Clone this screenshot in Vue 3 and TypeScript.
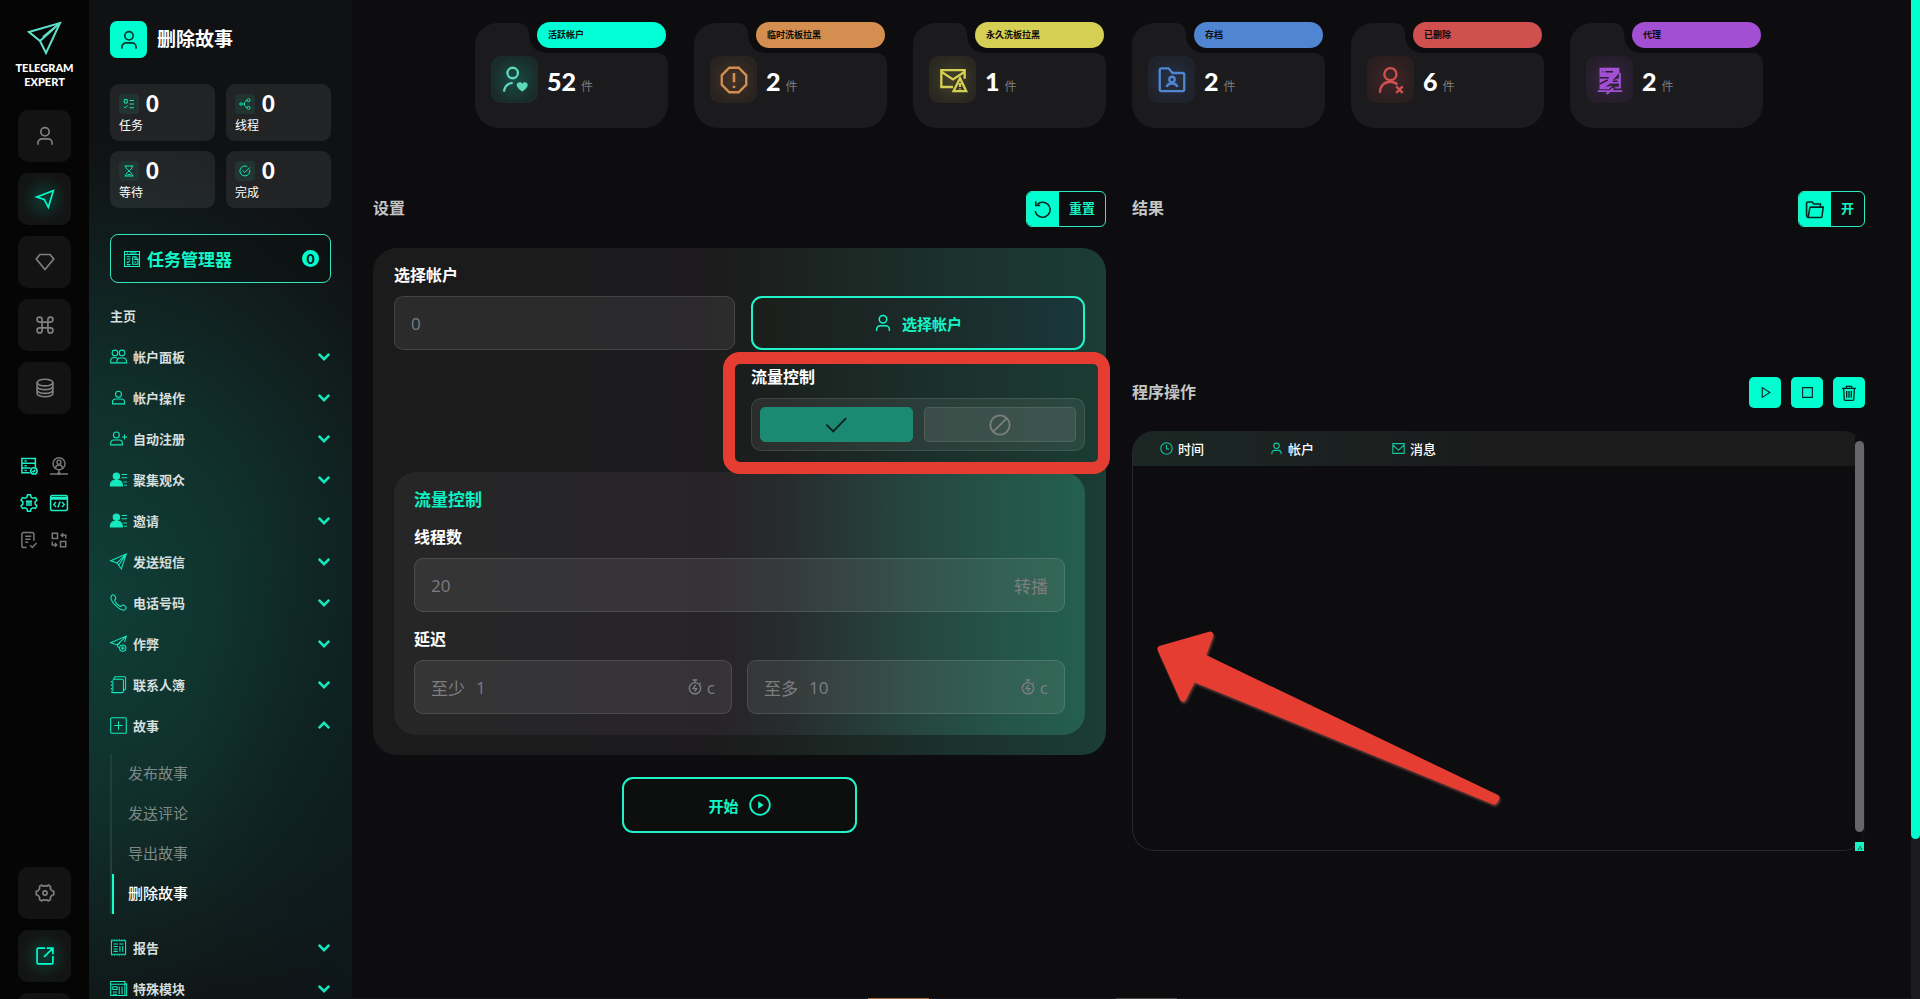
<script setup lang="ts">
import { ref } from 'vue'

interface MenuItem {
  label: string
  icon: string
  children?: string[]
}

interface AccountCard {
  label: string
  count: number
  icon: string
  color: string
}

const icons: Record<string, string> = {
  logo: '<path d="M2 11 33 2 19 32 13 20Z"/><path d="M33 2 13 20M33 2 16 16"/>',
  user: '<circle cx="12" cy="7" r="5"/><path d="M3.500 22.500v-2a5 5 0 0 1 5-5h7a5 5 0 0 1 5 5v2"/>',
  nav: '<path d="M2 9.500 22 2l-6 20-5-9.500Z"/>',
  diamond: '<path d="M6 3h12l4.500 5.500L12 21 1.500 8.500Z"/>',
  command: '<path d="M8.500 8.500h7v7h-7zM8.500 8.500V5.500a3 3 0 1 0-3 3zM15.500 8.500h3a3 3 0 1 0-3-3zM15.500 15.500v3a3 3 0 1 0 3-3zM8.500 15.500h-3a3 3 0 1 0 3 3z"/>',
  database: '<ellipse cx="12" cy="5.500" rx="9.500" ry="4"/><path d="M2.500 5.500v13c0 2.200 4.200 4 9.500 4s9.500-1.800 9.500-4v-13M2.500 10c0 2.200 4.200 4 9.500 4s9.500-1.800 9.500-4M2.500 14.500c0 2.200 4.200 4 9.500 4s9.500-1.800 9.500-4"/>',
  server: '<path d="M13 21H2.500V2h18v12M2.500 8.300h18M2.500 14.700H14M6 5.200h3M6 11.500h3M6 18h3"/><circle cx="18.500" cy="18.500" r="4.300"/><path d="m16.500 18.500 1.500 1.500 2.500-3"/>',
  proxyUser: '<circle cx="12" cy="9" r="8"/><circle cx="12" cy="7" r="2.600"/><path d="M7.500 15c0-3 2-4.500 4.500-4.500s4.500 1.500 4.500 4.500M12 17v4M0 22.500h24M10.500 22.500h3"/><circle cx="12" cy="22" r="1.200"/>',
  gearList: '<path d="M10 1h4l.8 3.200 2.600 1.500 3.200-1 2 3.500-2.400 2.300v3l2.400 2.300-2 3.500-3.200-1-2.600 1.500L14 23h-4l-.8-3.200-2.600-1.500-3.200 1-2-3.500 2.400-2.300v-3L1.400 8.200l2-3.500 3.200 1 2.600-1.500Z"/><path d="M8 9.500h8M8 12h8M8 14.500h8"/>',
  code: '<rect x="0.800" y="2" width="22.400" height="20" rx="2"/><path d="M1 6.500h22M1 4.500h22M8 10.500 5 14l3 3.500M16 10.500l3 3.500-3 3.500M13.500 10 10.500 18"/>',
  noteCheck: '<path d="M9 22H5a2.500 2.500 0 0 1-2.500-2.500v-15A2.500 2.500 0 0 1 5 2h11a2.500 2.500 0 0 1 2.500 2.500V13M7 7h8M7 11h7M7 15h4M13.500 19l3 3 5.500-6"/>',
  swap: '<path d="M3 3h7v7H3zM14 14h7v7h-7zM21 10V5.500h-6M17.500 3 15 5.500 17.500 8M3 14v4.500h6M6.500 16 9 18.500 6.500 21"/>',
  gear: '<path d="M8 2.500c1.500 1.500 2.500 1.600 4 .8 1.500.8 2.500.7 4-.8l2.500 1.500c-.4 2.200 0 3.300 1 4.200.6 1 1.500 1.500 3 1.800v4c-1.500.3-2.400.8-3 1.800-1 .9-1.400 2-1 4.200L16 21.500c-1.500-1.500-2.500-1.600-4-.8-1.500-.8-2.500-.7-4 .8L5.500 20c.4-2.200 0-3.300-1-4.200-.6-1-1.500-1.500-3-1.800v-4c1.500-.3 2.400-.8 3-1.800 1-.9 1.400-2 1-4.200Z"/><circle cx="12" cy="12" r="2.500"/>',
  external: '<path d="M12 2.500H4A1.500 1.500 0 0 0 2.500 4v16A1.500 1.500 0 0 0 4 21.500h16a1.500 1.500 0 0 0 1.500-1.500v-8M14 2.500h7.500V10M21 3 11 13"/>',
  tasks: '<path d="M2.500 3h6v7h-6zM2 17.500l2.500 2.500L9 15M13 5h9M13 12h9M13 19.500h9"/>',
  share: '<circle cx="19" cy="4.500" r="3"/><circle cx="19" cy="19.500" r="3"/><circle cx="4" cy="12" r="2.500"/><path d="M6.500 12H11M16 5c-3 0-5 3-5 7s2 7 5 7"/>',
  hourglass: '<path d="M3 2h18M3 22h18M5.500 2c0 5 3 7 6.500 10 3.500-3 6.500-5 6.500-10M5.500 22c0-5 3-7 6.500-10 3.500 3 6.500 5 6.500 10M9 19h6"/>',
  checkCircle: '<path d="M21.500 9.500A10 10 0 1 1 16.500 3M7.500 11l4 4L21.500 5"/>',
  taskManager: '<path d="M2 2h20v20H2zM2 6h20M5 4h2M9 4h9M5 9h5M5 12h5M5 15.500l1.500 1.500L9.500 14M5 19.500h5M13 9h4l3 3v7h-7zM16 9v3.500h4M15 16h3" stroke-width="1.400"/>',
  users: '<circle cx="7" cy="7" r="4"/><circle cx="17" cy="7" r="4"/><path d="M9 21H1v-3c0-3 2-4.500 5-4.500h2l2.500 1.500M9.500 21c0-5 2.500-7 5-7h4c3 0 5 2 5 7Z"/>',
  person: '<circle cx="12" cy="7.500" r="4.200"/><path d="M3.500 21v-2.500c0-3 2-4.500 4.500-4.500h8c2.500 0 4.500 1.500 4.500 4.500V21Z"/>',
  personPlus: '<circle cx="9" cy="7" r="4.200"/><path d="M1 21v-2c0-3 2-5 4.500-5H13c2.500 0 4.500 2 4.500 5v2ZM20.500 6.500v7M17 10h7"/>',
  personList: '<g fill="currentColor"><circle cx="9" cy="7.500" r="4.500"/><path d="M0.500 21c0-5 3-7.500 6-7.500h5c3 0 6 2.500 6 7.500Z"/></g><path d="M16.500 5H24M16.500 9.500H24M19 15.500h5M20 20h4"/>',
  plane: '<path d="M1 11 23 1.500 16 22.500 10 14ZM23 1.500 10 14M23 1.500 12.500 17M1 11l9 3"/>',
  phone: '<path d="M2 2.500C4-.2 6.500 1.500 8 4.500c1 2-.2 3.200-1.500 4C7 12 12 17 15.500 17.500c.8-1.500 2-2.500 4-1.500 3 1.500 4.700 4 2 6C16 26-2 10 2 2.500Z"/>',
  planePlus: '<path d="M14 12 10 14 1 11 23 1.500 20.500 10M23 1.500 10 14l2 4"/><circle cx="18" cy="18.500" r="4.500"/><path d="M18 16v5M15.500 18.500h5"/>',
  book: '<path d="M4 4.500h13a2 2 0 0 1 2 2v15a2 2 0 0 1-2 2H4a2 2 0 0 1-2-2M5 4.500 7 1h13.500A1.500 1.500 0 0 1 22 2.500V18l-3 3M2 7v2M2 12v2M2 17v2M4 6v16"/>',
  plusBox: '<rect x="1" y="1" width="22" height="22" rx="1.500"/><path d="M12 6v12M6 12h12"/>',
  report: '<path d="M2 2.500h20v19H2zM5 7h6M13 7h6M5 10.500h6M5 14h6M5 17.500h6M14 10v8M18 10v8"/><path d="M2 1h20M2 23h20" stroke-dasharray="1.500 2"/>',
  modules: '<path d="M1 2h20v20H1zM21 5.500h2.500V22H21M1 6h20M4 9.500h6v4H4zM4 17h6M4 20h6M13 9v11M17 9v11"/>',
  chevron: '<path d="m2 2 6 6 6-6"/>',
  userHeart: '<circle cx="10" cy="6" r="4.500"/><path d="M2.500 22c.5-4 2.500-7 7.500-7.500"/><path d="M18.200 22s-4.700-3-4.700-5.700c0-2.400 3.300-3.300 4.700-1 1.400-2.300 4.700-1.400 4.700 1C22.900 19 18.200 22 18.200 22Z" fill="currentColor" stroke="none"/>',
  alert: '<path d="M8 1.500h8l6.500 6.500v8L16 22.500H8L1.500 16V8Z"/><path d="M12 6v8M12 17v1.800" stroke-width="2.200"/>',
  mailWarn: '<path d="M12 18H2V3.500h20V11M2 5l10 6.500L22 5"/><path d="M18 10.500 12.500 21.500h10.800ZM18 14.500v3.500M18 19.300v.8"/>',
  folderUser: '<path d="M1.500 20V3.500A1.500 1.500 0 0 1 3 2h6l3.500 4H21a1.500 1.500 0 0 1 1.500 1.500V20a1.500 1.500 0 0 1-1.500 1.500H3A1.500 1.500 0 0 1 1.500 20Z"/><circle cx="12" cy="11.500" r="2.300"/><path d="M7.500 18c.5-2.500 2.500-3 4.500-3s4 .5 4.500 3"/>',
  userX: '<circle cx="11.500" cy="7" r="5.200"/><path d="M2.500 23c0-6 4-9.500 9-9.500 3 0 4.500 1 6 2.500M16.500 17.500l5.500 5.500M22 17.500 16.500 23"/>',
  serverOff: '<path d="M3 1.500h17v4.500l-6 6.500 7-2.500v5h-9l-4 3 6-1-3 3H3Z" fill="currentColor" stroke="none"/><path d="M20.500 6v12.500h-4M1.500 21.500h21M9 24l6-5" stroke-width="1.600"/><path d="M5.500 5h.8M8 5h6.500M14.500 13h4M3 10h8M3 15.500 10 12" stroke="#2a1d31" stroke-width="1.300"/>',
  reset: '<path d="M5.500 5.500A9.500 9.500 0 1 1 2.800 14M3.500 1.500v5.500H9"/>',
  folderOpen: '<path d="M2 19V4a1.500 1.500 0 0 1 1.500-1.500H9L11 5h8.500v3.500M2 19V20A2 2 0 0 0 4 22h16a1.500 1.500 0 0 0 1.500-1.500L23 9H7.500a1.500 1.500 0 0 0-1.500 1.300L4 22"/>',
  check: '<path d="M1.500 11.500 9 19 23 4.500"/>',
  ban: '<circle cx="12" cy="12" r="10.500"/><path d="M4.500 19.500l15-15"/>',
  timer: '<circle cx="12" cy="14" r="8.500"/><path d="M8.500 1.500h7M12 2v3.500M19 5.500l1.500 1.500"/><path d="m13 9-4 5.500h5.500L11.500 19"/>',
  playCircle: '<circle cx="12" cy="12" r="10.700"/><path d="m10 8 6 4-6 4Z" fill="currentColor" stroke="none"/>',
  play: '<path d="m6 3 14 9L6 21Z"/>',
  stop: '<path d="M3 3h18v18H3z"/>',
  trash: '<path d="M1.500 5h21M8 5V2h8v3M4 5l.8 16.500A1.500 1.500 0 0 0 6.300 23h11.400a1.500 1.500 0 0 0 1.500-1.500L20 5M8.500 9v10M12 9v10M15.500 9v10"/>',
  clock: '<circle cx="12" cy="12" r="10.500"/><path d="M12 5.500V13h5"/>',
  mail: '<path d="M1.500 3h21v18h-21zM2 6l10 9 10-9"/>',
}

const railItems = ['user', 'nav', 'diamond', 'command', 'database']
const statusIcons = [
  { icon: 'server', on: true },
  { icon: 'proxyUser', on: false },
  { icon: 'gearList', on: true },
  { icon: 'code', on: true },
  { icon: 'noteCheck', on: false },
  { icon: 'swap', on: false },
]

const counters = [
  { icon: 'tasks', value: 0, label: '任务' },
  { icon: 'share', value: 0, label: '线程' },
  { icon: 'hourglass', value: 0, label: '等待' },
  { icon: 'checkCircle', value: 0, label: '完成' },
]

const menu: MenuItem[] = [
  { label: '帐户面板', icon: 'users' },
  { label: '帐户操作', icon: 'person' },
  { label: '自动注册', icon: 'personPlus' },
  { label: '聚集观众', icon: 'personList' },
  { label: '邀请', icon: 'personList' },
  { label: '发送短信', icon: 'plane' },
  { label: '电话号码', icon: 'phone' },
  { label: '作弊', icon: 'planePlus' },
  { label: '联系人簿', icon: 'book' },
  { label: '故事', icon: 'plusBox', children: ['发布故事', '发送评论', '导出故事', '删除故事'] },
  { label: '报告', icon: 'report' },
  { label: '特殊模块', icon: 'modules' },
]
const activePage = '删除故事'

const cards: AccountCard[] = [
  { label: '活跃帐户', count: 52, icon: 'userHeart', color: 'mint' },
  { label: '临时洗板拉黑', count: 2, icon: 'alert', color: 'orange' },
  { label: '永久洗板拉黑', count: 1, icon: 'mailWarn', color: 'yellow' },
  { label: '存档', count: 2, icon: 'folderUser', color: 'blue' },
  { label: '已删除', count: 6, icon: 'userX', color: 'red' },
  { label: '代理', count: 2, icon: 'serverOff', color: 'purple' },
]

const columns = [
  { icon: 'clock', label: '时间' },
  { icon: 'user', label: '帐户' },
  { icon: 'mail', label: '消息' },
]

const accounts = ref('0')
const threads = ref('20')
const delayMin = ref('1')
const delayMax = ref('10')
const flow = ref<'on' | 'off'>('on')
</script>

<template>
  <div class="app">
    <nav class="rail" aria-label="模块">
      <a class="brand" href="#">
        <svg class="brand-logo" viewBox="0 0 35 34" v-html="icons.logo"></svg>
        <span>TELEGRAM</span>
        <span>EXPERT</span>
      </a>
      <div class="rail-list">
        <button
          v-for="name in railItems"
          :key="name"
          type="button"
          class="rail-btn"
          :class="{ active: name === 'nav' }"
          :aria-label="name"
        >
          <svg class="icon i20" viewBox="0 0 24 24" v-html="icons[name]"></svg>
        </button>
      </div>
      <div class="status">
        <svg
          v-for="s in statusIcons"
          :key="s.icon"
          class="icon i18"
          :class="{ on: s.on }"
          viewBox="0 0 24 24"
          v-html="icons[s.icon]"
        ></svg>
      </div>
      <div class="rail-list bottom">
        <button type="button" class="rail-btn" aria-label="gear">
          <svg class="icon i20" viewBox="0 0 24 24" v-html="icons.gear"></svg>
        </button>
        <button type="button" class="rail-btn active" aria-label="external">
          <svg class="icon i20" viewBox="0 0 24 24" v-html="icons.external"></svg>
        </button>
        <button type="button" class="rail-btn" aria-label="more"></button>
      </div>
    </nav>

    <aside class="sidebar">
      <header class="page-head">
        <span class="page-icon"><svg class="icon i20" viewBox="0 0 24 24" v-html="icons.user"></svg></span>
        <h1>删除故事</h1>
      </header>
      <div class="counters">
        <div v-for="c in counters" :key="c.label" class="counter">
          <div class="counter-top">
            <span class="counter-icon"><svg class="icon i12" viewBox="0 0 24 24" v-html="icons[c.icon]"></svg></span>
            <strong>{{ c.value }}</strong>
          </div>
          <span>{{ c.label }}</span>
        </div>
      </div>
      <button type="button" class="manager">
        <svg class="icon i18" viewBox="0 0 24 24" v-html="icons.taskManager"></svg>
        <span>任务管理器</span>
        <b>0</b>
      </button>
      <p class="menu-title">主页</p>
      <ul class="menu">
        <li v-for="item in menu" :key="item.label">
          <button type="button" class="menu-item">
            <svg class="icon i17" viewBox="0 0 24 24" v-html="icons[item.icon]"></svg>
            <span>{{ item.label }}</span>
            <svg class="icon chevron" :class="{ open: item.children }" viewBox="0 0 16 10" v-html="icons.chevron"></svg>
          </button>
          <ul v-if="item.children" class="submenu">
            <li v-for="child in item.children" :key="child">
              <a href="#" :class="{ active: child === activePage }">{{ child }}</a>
            </li>
          </ul>
        </li>
      </ul>
    </aside>

    <main class="main">
      <section class="cards">
        <article v-for="card in cards" :key="card.label" class="card" :class="card.color">
          <div class="card-tab"></div>
          <div class="card-body"></div>
          <span class="pill">{{ card.label }}</span>
          <div class="card-content">
            <span class="card-icon"><svg class="icon i28" viewBox="0 0 24 24" v-html="icons[card.icon]"></svg></span>
            <strong>{{ card.count }}</strong>
            <small>件</small>
          </div>
        </article>
      </section>

      <div class="columns">
        <section class="settings">
          <header class="section-head">
            <h2>设置</h2>
            <button type="button" class="split reset">
              <span class="split-icon"><svg class="icon i19" viewBox="0 0 24 24" v-html="icons.reset"></svg></span>
              <span class="split-text">重置</span>
            </button>
          </header>

          <form class="panel" @submit.prevent>
            <div class="account-grid">
              <label class="label wide" for="accounts">选择帐户</label>
              <div class="field"><input id="accounts" v-model="accounts" type="text" /></div>
              <button type="button" class="outline pick">
                <svg class="icon i18" viewBox="0 0 24 24" v-html="icons.user"></svg>
                选择帐户
              </button>
              <div class="flow" role="radiogroup" aria-labelledby="flow-label">
                <span id="flow-label" class="label">流量控制</span>
                <div class="toggle">
                  <label class="option" :class="{ chosen: flow === 'on' }">
                    <input v-model="flow" type="radio" name="flow" value="on" aria-label="开" />
                    <svg class="icon i22" viewBox="0 0 24 24" v-html="icons.check"></svg>
                  </label>
                  <label class="option" :class="{ chosen: flow === 'off' }">
                    <input v-model="flow" type="radio" name="flow" value="off" aria-label="关" />
                    <svg class="icon i22" viewBox="0 0 24 24" v-html="icons.ban"></svg>
                  </label>
                </div>
                <span class="highlight"></span>
              </div>
            </div>

            <div class="inner">
              <h3>流量控制</h3>
              <label class="label" for="threads">线程数</label>
              <div class="field">
                <input id="threads" v-model="threads" type="text" />
                <span>转播</span>
              </div>
              <p class="label second">延迟</p>
              <div class="delay">
                <div class="field">
                  <label for="delay-min">至少</label>
                  <input id="delay-min" v-model="delayMin" type="text" />
                  <svg class="icon i16" viewBox="0 0 24 24" v-html="icons.timer"></svg>
                  <span class="unit">c</span>
                </div>
                <div class="field">
                  <label for="delay-max">至多</label>
                  <input id="delay-max" v-model="delayMax" type="text" />
                  <svg class="icon i16" viewBox="0 0 24 24" v-html="icons.timer"></svg>
                  <span class="unit">c</span>
                </div>
              </div>
            </div>
          </form>

          <button type="button" class="outline start">
            开始
            <svg class="icon i22" viewBox="0 0 24 24" v-html="icons.playCircle"></svg>
          </button>
        </section>

        <section class="results">
          <header class="section-head">
            <h2>结果</h2>
            <button type="button" class="split">
              <span class="split-icon"><svg class="icon i19" viewBox="0 0 24 24" v-html="icons.folderOpen"></svg></span>
              <span class="split-text">开</span>
            </button>
          </header>

          <header class="section-head actions">
            <h2>程序操作</h2>
            <div class="action-list">
              <button type="button" class="square" aria-label="play"><svg class="icon i14" viewBox="0 0 24 24" v-html="icons.play"></svg></button>
              <button type="button" class="square" aria-label="stop"><svg class="icon i14" viewBox="0 0 24 24" v-html="icons.stop"></svg></button>
              <button type="button" class="square" aria-label="trash"><svg class="icon i16" viewBox="0 0 24 24" v-html="icons.trash"></svg></button>
            </div>
          </header>

          <div class="log">
            <div class="log-frame">
              <table>
                <thead>
                  <tr>
                    <th v-for="col in columns" :key="col.label" scope="col">
                      <span class="th">
                        <svg class="icon i14" viewBox="0 0 24 24" v-html="icons[col.icon]"></svg>{{ col.label }}
                      </span>
                    </th>
                  </tr>
                </thead>
              </table>
            </div>
            <div class="log-scroll"></div>
            <svg class="log-grip" viewBox="0 0 9 9"><path d="M0 0h9v9H0z" fill="#12f7c4" /><path d="M3 8l3-4M6 8l1-2" stroke="#0d3a30" /></svg>
            <svg class="arrow" viewBox="0 0 360 190">
              <path d="M12 24 61 10 53 32 347 173 345 176 44 53 34 73Z" />
            </svg>
          </div>
        </section>
      </div>
      <div class="edge"><i></i><i></i></div>
    </main>
    <div class="page-scroll"><span></span></div>
  </div>
</template>

<style>
body {
  background: #0d0c0e;
  overflow: hidden;
}
</style>

<style scoped>
* {
  box-sizing: border-box;
}
.app {
  --accent: #00ffd0;
  display: flex;
  height: 100vh;
  overflow: hidden;
  background: #0d0c0e;
  color: #fff;
  font-family: 'Liberation Sans', 'Noto Sans CJK SC', sans-serif;
}
button,
input {
  font: inherit;
  color: inherit;
  margin: 0;
}
button {
  padding: 0;
  border: 0;
  background: none;
  cursor: pointer;
}
a {
  color: inherit;
  text-decoration: none;
}
h1,
h2,
h3,
p,
ul {
  margin: 0;
  padding: 0;
  list-style: none;
}
.icon {
  flex: none;
  fill: none;
  stroke: currentColor;
  stroke-width: 2;
  overflow: visible;
}
.i12 { width: 12px; height: 12px; }
.i14 { width: 13px; height: 13px; }
.i16 { width: 16px; height: 16px; }
.i17 { width: 17px; height: 17px; stroke-width: 1.5; }
.i18 { width: 18px; height: 18px; }
.i19 { width: 19px; height: 19px; }
.i20 { width: 20px; height: 20px; }
.i22 { width: 22px; height: 22px; }
.i28 { width: 28px; height: 28px; }

/* Icon rail */
.rail {
  flex: none;
  width: 89px;
  padding-top: 21px;
  display: flex;
  flex-direction: column;
  align-items: center;
  background: #050506;
}
.brand {
  display: flex;
  flex-direction: column;
  align-items: center;
  font: 900 11px/14px Lato, 'Liberation Sans', sans-serif;
}
.brand-logo {
  width: 35px;
  height: 34px;
  margin-bottom: 6px;
  fill: none;
  stroke: #5fe0c6;
  stroke-width: 2;
}
.rail-list {
  display: flex;
  flex-direction: column;
  gap: 11px;
  margin-top: 21px;
}
.rail-btn {
  width: 53px;
  height: 52px;
  display: grid;
  place-items: center;
  border-radius: 10px;
  background: #131314;
  color: #808083;
}
.rail-btn.active {
  color: var(--accent);
  background: radial-gradient(circle, #0d3a30 0, #131817 55%, #131414 70%);
}
.status {
  display: grid;
  grid-template-columns: 19px 19px;
  column-gap: 11px;
  row-gap: 19px;
  margin-top: 43px;
  color: #77777a;
}
.status .on {
  color: #1cf0c6;
}
.rail-list.bottom {
  margin-top: auto;
  margin-bottom: -46px;
}

/* Sidebar */
.sidebar {
  flex: none;
  width: 263px;
  padding: 21px 21px 0;
  overflow: hidden;
  background:
    radial-gradient(ellipse 60% 45% at 100% 85%, rgba(12, 30, 34, 0.6), transparent),
    radial-gradient(ellipse 150% 46% at 0 60%, #0f3f37, #102f2b 45%, rgba(16, 20, 21, 0) 100%),
    #101113;
}
.page-head {
  display: flex;
  align-items: center;
  gap: 10px;
}
.page-icon {
  width: 37px;
  height: 37px;
  display: grid;
  place-items: center;
  border-radius: 7px;
  background: var(--accent);
  color: #08352c;
}
h1 {
  font-size: 19px;
  line-height: 28px;
}
.counters {
  display: grid;
  grid-template-columns: 1fr 1fr;
  gap: 10px 11px;
  margin: 26px 0;
}
.counter {
  height: 57px;
  padding: 8px 9px 0;
  border-radius: 9px;
  background: rgba(255, 255, 255, 0.08);
  font-size: 12px;
  line-height: 20px;
}
.counter-top {
  display: flex;
  align-items: center;
  gap: 7px;
  height: 24px;
}
.counter-icon {
  width: 20px;
  height: 20px;
  display: grid;
  place-items: center;
  border-radius: 4px;
  background: #223430;
  color: #12e6b8;
}
.counter strong {
  font: 900 22px/22px Lato, sans-serif;
}
.manager {
  width: 100%;
  height: 49px;
  padding: 0 11px 0 12px;
  display: flex;
  align-items: center;
  gap: 6px;
  border: 1px solid #35e6c2;
  border-radius: 8px;
  background: rgba(10, 16, 16, 0.45);
  color: #12f7c8;
  font-size: 17px;
  font-weight: 700;
}
.manager b {
  margin-left: auto;
  width: 17px;
  height: 17px;
  border-radius: 50%;
  background: var(--accent);
  color: #06211c;
  font: 900 14px/17px Lato, sans-serif;
}
.menu-title {
  margin: 24px 0 9px;
  font-size: 13px;
  font-weight: 700;
  line-height: 20px;
  color: #d7dfdd;
}
.menu-item {
  width: 100%;
  height: 41px;
  display: flex;
  align-items: center;
  gap: 6px;
  color: #d7dfdd;
  font-size: 13px;
  font-weight: 700;
}
.menu-item .icon {
  color: #14e9bd;
}
.menu-item .chevron {
  width: 14px;
  height: 9px;
  margin-left: auto;
  stroke-width: 3;
}
.chevron.open {
  transform: rotate(180deg);
}
.submenu {
  margin: 8px 0 13px;
  border-left: 2px solid #1f3f3b;
  color: #7e8a88;
  font-size: 15px;
}
.submenu a {
  display: block;
  height: 40px;
  padding-left: 14px;
  line-height: 40px;
  border-left: 2px solid transparent;
}
.submenu a.active {
  border-color: #14ffd0;
  color: #fff;
  font-weight: 500;
}

/* Main area */
.main {
  flex: 1;
  min-width: 0;
  position: relative;
  padding: 23px 46px 0 21px;
}
.cards {
  display: flex;
  justify-content: center;
  gap: 26px;
}
.card {
  position: relative;
  width: 193px;
  height: 105px;
}
.card-tab {
  width: 54px;
  height: 30px;
  border-radius: 22px 10px 0 0;
  background: #1b1a1c;
}
.card-tab::after {
  content: '';
  position: absolute;
  left: 54px;
  top: 14px;
  width: 16px;
  height: 16px;
  background: radial-gradient(circle at top right, transparent 15px, #1b1a1c 16px);
}
.card-body {
  height: 75px;
  border-radius: 0 10px 24px 24px;
  background: #1b1a1c;
}
.pill {
  position: absolute;
  top: -1px;
  right: 2px;
  width: 129px;
  height: 26px;
  padding-left: 11px;
  border-radius: 13px;
  background: var(--tone);
  color: #0b0b0b;
  font-size: 9px;
  font-weight: 700;
  line-height: 26px;
}
.card-content {
  position: absolute;
  left: 16px;
  top: 33px;
  display: flex;
  align-items: center;
  height: 47px;
}
.card-icon {
  width: 47px;
  height: 47px;
  display: grid;
  place-items: center;
  border-radius: 10px;
  margin-right: 9px;
  color: var(--tone);
  background: radial-gradient(circle, color-mix(in srgb, var(--tone) 22%, #1b1a1c), color-mix(in srgb, var(--tone) 8%, #1b1a1c) 70%);
}
.card strong {
  font: 900 25px/47px Lato, sans-serif;
  padding-top: 4px;
}
.card small {
  margin-left: 5px;
  padding-top: 11px;
  font-size: 12px;
  color: #7c7c7e;
}
.mint { --tone: #00ffd5; }
.mint .card-icon { color: #5fd6bb; }
.orange { --tone: #d38e50; }
.yellow { --tone: #d5cf54; }
.blue { --tone: #5085d2; }
.red { --tone: #d05050; }
.purple { --tone: #a24fd3; }

.columns {
  display: grid;
  grid-template-columns: 1fr 1fr;
  gap: 26px;
  margin-top: 63px;
}
.section-head {
  display: flex;
  align-items: center;
  justify-content: space-between;
  min-height: 36px;
}
h2 {
  font-size: 16px;
  font-weight: 700;
  line-height: 24px;
  color: #c6c6c6;
}
.split {
  height: 36px;
  display: flex;
  border: 1px solid #2bebc4;
  border-radius: 6px;
  overflow: hidden;
  color: #12f7c8;
  font-size: 13px;
  font-weight: 700;
}
.split-icon {
  width: 32px;
  height: 34px;
  display: grid;
  place-items: center;
  background: var(--accent);
  color: #06251f;
}
.split-text {
  padding: 0 10px;
  line-height: 34px;
}
.panel {
  margin-top: 21px;
  padding: 16px 21px 20px;
  border-radius: 24px;
  background: linear-gradient(90deg, #1b1b1c 0, #1c1a1c 45%, #1b211f 56%, #1b2f2a 75%, #1b3d33 100%);
}
.account-grid {
  display: grid;
  grid-template-columns: 341fr 334fr;
  column-gap: 16px;
}
.label {
  display: block;
  padding: 0;
  font-size: 16px;
  font-weight: 700;
  line-height: 24px;
  margin-bottom: 8px;
}
.wide {
  grid-column: 1 / 3;
}
.field {
  height: 54px;
  min-width: 0;
  padding: 0 16px;
  display: flex;
  align-items: center;
  border: 1px solid rgba(255, 255, 255, 0.12);
  border-radius: 9px;
  background: rgba(255, 255, 255, 0.07);
  color: #7d7e80;
  font-family: 'Open Sans', 'Noto Sans CJK SC', sans-serif;
  font-size: 17px;
}
.field input {
  flex: 1;
  min-width: 0;
  padding: 0;
  border: 0;
  outline: 0;
  background: none;
}
.field label {
  margin-right: 11px;
}
.unit {
  margin-left: 4px;
}
.outline {
  display: flex;
  align-items: center;
  justify-content: center;
  border: 2px solid #20f3ca;
  border-radius: 11px;
  color: #12f7c8;
  font-size: 15px;
  font-weight: 700;
}
.pick {
  height: 54px;
  gap: 10px;
  background: linear-gradient(90deg, #1b1e1b, #1b2a28 50%, #1a373b);
}
.flow {
  grid-column: 2;
  position: relative;
  min-width: 0;
  margin-top: 16px;
}
.toggle {
  height: 53px;
  padding: 8px;
  display: grid;
  grid-template-columns: 1fr 1fr;
  gap: 11px;
  border: 1px solid rgba(255, 255, 255, 0.1);
  border-radius: 10px;
  background: rgba(255, 255, 255, 0.07);
}
.option {
  position: relative;
  display: grid;
  place-items: center;
  border: 1px solid rgba(255, 255, 255, 0.1);
  border-radius: 5px;
  background: rgba(255, 255, 255, 0.08);
  color: #7b807e;
}
.option input {
  position: absolute;
  opacity: 0;
}
.option.chosen {
  border-color: #1c8a72;
  background: #1c8a72;
  color: #0a211c;
}
.highlight {
  position: absolute;
  z-index: 2;
  top: -14px;
  left: -28px;
  right: -25px;
  bottom: -23px;
  border: 12px solid #e63d33;
  border-radius: 17px;
  pointer-events: none;
}
.inner {
  margin-top: 21px;
  padding: 17px 20px 21px;
  border-radius: 22px;
  background: linear-gradient(90deg, #262627 0, #272427 47%, #272b2c 56%, #26453f 75%, #245546 88%, #245f4d 100%);
}
h3 {
  margin-bottom: 13px;
  font-size: 17px;
  line-height: 24px;
  color: #0bf3c4;
}
.second {
  margin-top: 16px;
}
.delay {
  display: grid;
  grid-template-columns: 1fr 1fr;
  gap: 15px;
}
.start {
  width: 235px;
  height: 56px;
  margin: 22px auto 0;
  gap: 10px;
  background: #0c0f0d;
}
.actions {
  min-height: 31px;
  margin-top: 150px;
}
.action-list {
  display: flex;
  gap: 10px;
}
.square {
  width: 32px;
  height: 31px;
  display: grid;
  place-items: center;
  border-radius: 5px;
  background: var(--accent);
  color: #06251f;
}
.log {
  position: relative;
  height: 420px;
  margin-top: 23px;
}
.log-frame {
  height: 100%;
  border: 1px solid #29292b;
  border-top: 0;
  border-right-color: #1a1a1c;
  border-radius: 22px;
  overflow: hidden;
}
.log table {
  width: calc(100% - 9px);
  table-layout: fixed;
  border-collapse: collapse;
  background: linear-gradient(90deg, #1b2724 0, #1b2523 12%, #1b1b1c 50%);
}
.log th {
  height: 35px;
  padding: 0;
  font-size: 13px;
  font-weight: 500;
}
.log th:nth-child(1) {
  width: 137px;
  padding-left: 27px;
}
.log th:nth-child(2) {
  width: 122px;
}
.th {
  display: flex;
  align-items: center;
  gap: 5px;
}
.th .icon {
  color: #12c79f;
}
.log-scroll {
  position: absolute;
  top: 10px;
  right: 1px;
  bottom: 19px;
  width: 9px;
  border-radius: 5px;
  background: #666567;
}
.log-grip {
  position: absolute;
  right: 1px;
  bottom: 0;
  width: 9px;
  height: 9px;
}
.arrow {
  position: absolute;
  left: 17px;
  top: 194px;
  width: 360px;
  height: 190px;
  fill: #e63d33;
  stroke: #e63d33;
  stroke-width: 7;
  stroke-linejoin: round;
  filter: drop-shadow(1px 2px 1px rgba(150, 90, 85, 0.6));
  pointer-events: none;
}
.edge {
  position: absolute;
  left: 0;
  right: 0;
  bottom: 0;
  height: 1px;
  display: flex;
  gap: 187px;
  padding-left: 516px;
  background: #17191f;
}
.edge i {
  width: 61px;
  background: #a5673c;
}
.edge i:last-child {
  background: #4a4648;
}
.page-scroll {
  flex: none;
  width: 9px;
  background: #1d1b1f;
}
.page-scroll span {
  display: block;
  height: 84%;
  border-radius: 0 0 5px 5px;
  background: var(--accent);
}
</style>
